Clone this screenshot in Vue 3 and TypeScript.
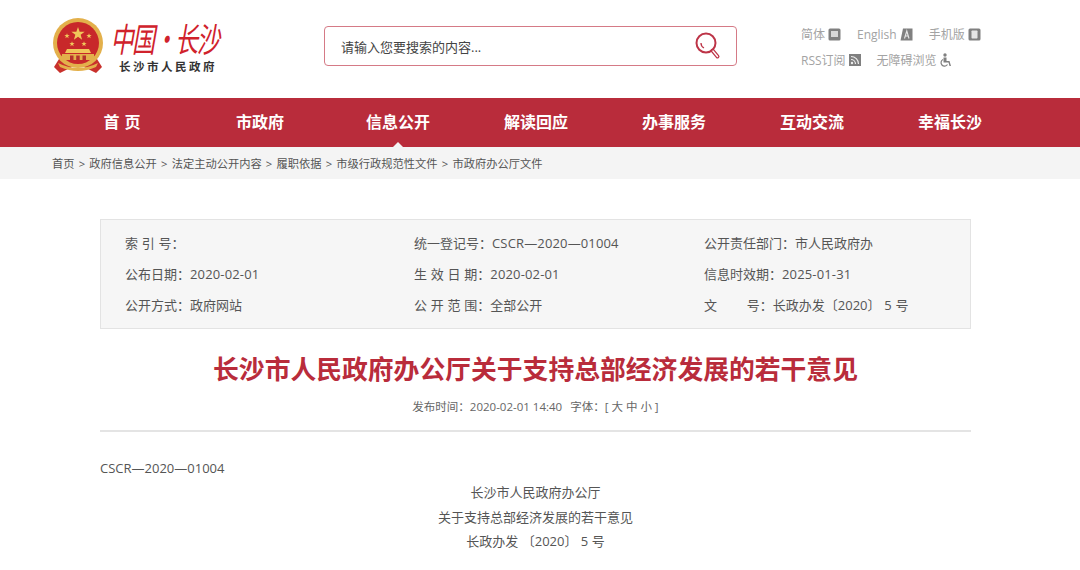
<script setup lang="ts">
const navItems: string[] = ['首 页', '市政府', '信息公开', '解读回应', '办事服务', '互动交流', '幸福长沙']
const crumbs: string[] = ['首页', '政府信息公开', '法定主动公开内容', '履职依据', '市级行政规范性文件', '市政府办公厅文件']
const stars: { x: number; y: number; s: number }[] = [
  { x: 26, y: 17, s: 7 },
  { x: 15, y: 19, s: 2.8 },
  { x: 20, y: 27, s: 2.8 },
  { x: 32, y: 27, s: 2.8 },
  { x: 37, y: 19, s: 2.8 },
]
function starPoints(cx: number, cy: number, r: number): string {
  const pts: string[] = []
  for (let i = 0; i < 10; i++) {
    const rad = i % 2 === 0 ? r : r * 0.4
    const a = (Math.PI / 5) * i - Math.PI / 2
    pts.push(`${(cx + rad * Math.cos(a)).toFixed(2)},${(cy + rad * Math.sin(a)).toFixed(2)}`)
  }
  return pts.join(' ')
}
type Cell = { label: string; value: string; latin?: boolean }
const infoRows: Cell[][] = [
  [
    { label: '索 引 号：', value: '' },
    { label: '统一登记号：', value: 'CSCR—2020—01004', latin: true },
    { label: '公开责任部门：', value: '市人民政府办' },
  ],
  [
    { label: '公布日期：', value: '2020-02-01', latin: true },
    { label: '生 效 日 期：', value: '2020-02-01', latin: true },
    { label: '信息时效期：', value: '2025-01-31', latin: true },
  ],
  [
    { label: '公开方式：', value: '政府网站' },
    { label: '公 开 范 围：', value: '全部公开' },
    { label: '文　　 号：', value: '长政办发〔2020〕 5 号' },
  ],
]
</script>

<template>
  <div class="page">
    <header class="header">
      <div class="logo">
        <svg class="emblem" width="52" height="58" viewBox="0 0 52 58">
          <path d="M7 42 L2 50 L8 56 L20 50 L32 50 L44 56 L50 50 L45 42 Z" fill="#c9312c" />
          <circle cx="26" cy="26" r="25" fill="#e3b04b" />
          <circle cx="26" cy="26" r="21" fill="#c8282a" />
          <polygon v-for="(st, i) in stars" :key="i" :points="starPoints(st.x, st.y, st.s)" fill="#f0c75a" />
          <path d="M15 32 H37 L39 36 H13 Z" fill="#f0c75a" />
          <path d="M10 37 H42 V43 H10 Z" fill="#e3b04b" />
          <path d="M18 38.500 h3.500 v4.500 h-3.500 Z M24.200 38.500 h3.500 v4.500 h-3.500 Z M30.500 38.500 h3.500 v4.500 h-3.500 Z" fill="#b5332c" />
          <path d="M6 46 Q26 56 46 46 L44 50 Q26 58 8 50 Z" fill="#e3b04b" />
        </svg>
        <div class="logo-text">
          <div class="logo-brush">中国·长沙</div>
          <div class="logo-name">长沙市人民政府</div>
        </div>
      </div>

      <div class="search">
        <span class="placeholder">请输入您要搜索的内容...</span>
        <svg width="26" height="28" viewBox="0 0 26 28" fill="none" stroke="#bd3447">
          <circle cx="11" cy="11" r="9.500" stroke-width="2" />
          <path d="M6 11 a5.500 5.500 0 0 0 3 5" stroke-width="1.300" />
          <path d="M17.500 18.500 L22.500 24.500" stroke-width="4" stroke-linecap="round" />
          <path d="M18 19 L22.500 24.500" stroke="#fff" stroke-width="1.400" stroke-linecap="round" />
        </svg>
      </div>

      <div class="tools">
        <div class="tool-row">
          <span class="tool">简体
            <svg width="13" height="13" viewBox="0 0 13 13"><rect x="0.500" y="0.500" width="12" height="12" rx="1.500" fill="#808080" /><rect x="3" y="3" width="7" height="6" fill="#d8d8d8" /></svg>
          </span>
          <span class="tool">English
            <svg width="13" height="13" viewBox="0 0 13 13"><path d="M3 0.500 H12.500 V12.500 H0.500 Z" fill="#808080" /><path d="M4.500 10.500 L6.800 3 L9 10.500 M5.300 8 H8.300" stroke="#e6e6e6" stroke-width="1.100" fill="none" /></svg>
          </span>
          <span class="tool">手机版
            <svg width="13" height="13" viewBox="0 0 13 13"><rect x="0.500" y="0.500" width="12" height="12" rx="1.500" fill="#808080" /><rect x="3.500" y="2.500" width="6" height="8" rx="0.700" fill="#e6e6e6" /></svg>
          </span>
        </div>
        <div class="tool-row">
          <span class="tool">RSS订阅
            <svg width="12" height="12" viewBox="0 0 12 12"><rect width="12" height="12" fill="#808080" /><circle cx="3" cy="9" r="1.200" fill="#eee" /><path d="M2 5.500 A4.500 4.500 0 0 1 6.500 10 M2 2.500 A7.500 7.500 0 0 1 9.500 10" stroke="#eee" stroke-width="1.200" fill="none" /></svg>
          </span>
          <span class="tool">无障碍浏览
            <svg width="12" height="14" viewBox="0 0 12 14"><circle cx="5" cy="2" r="1.700" fill="#808080" /><path d="M3.500 4.500 h3 v3.500 h3 l1.500 5 h-1.500 l-1 -3.500 h-5 Z" fill="#808080" /><path d="M3 6.500 a3.500 3.500 0 1 0 4.500 5" stroke="#808080" stroke-width="1.200" fill="none" /></svg>
          </span>
        </div>
      </div>
    </header>

    <nav class="nav">
      <a v-for="(item, i) in navItems" :key="item" class="nav-item" :class="{ active: i === 2 }">{{ item }}</a>
    </nav>

    <div class="crumbs">
      <template v-for="(c, i) in crumbs" :key="c">
        <span v-if="i > 0" class="sep">&gt;</span>
        <span>{{ c }}</span>
      </template>
    </div>

    <main class="main">
      <section class="info">
        <template v-for="(row, r) in infoRows" :key="r">
          <div v-for="(cell, c) in row" :key="c" class="info-cell">{{ cell.label }}<span :class="{ latin: cell.latin }">{{ cell.value }}</span></div>
        </template>
      </section>

      <h1 class="title">长沙市人民政府办公厅关于支持总部经济发展的若干意见</h1>
      <div class="meta">发布时间：2020-02-01 14:40 <span class="font-switch">字体：[ 大 中 小 ]</span></div>

      <article class="body">
        <p class="doc-no">CSCR—2020—01004</p>
        <p class="center">长沙市人民政府办公厅</p>
        <p class="center">关于支持总部经济发展的若干意见</p>
        <p class="center">长政办发 〔2020〕 5 号</p>
      </article>
    </main>
  </div>
</template>

<style scoped>
.page {
  width: 1080px;
  height: 570px;
  overflow: hidden;
  background: #fff;
  font-family: "Open Sans", "Noto Sans CJK SC", sans-serif;
  color: #555;
}
.header {
  height: 98px;
  display: flex;
  align-items: flex-start;
  box-sizing: border-box;
  padding-left: 52px;
}
.logo {
  width: 272px;
  display: flex;
  padding-top: 17px;
}
.emblem {
  flex: none;
}
.logo-text {
  margin-left: 9px;
}
.logo-brush {
  font-family: "Noto Sans CJK SC", sans-serif;
  font-weight: 400;
  font-size: 30px;
  line-height: 40px;
  letter-spacing: -2px;
  width: 108px;
  white-space: nowrap;
  color: #d0222c;
  transform: skewX(-10deg) scale(0.77, 1.12);
  transform-origin: left center;
}
.logo-name {
  font-family: "Noto Sans CJK SC", sans-serif;
  font-size: 11.500px;
  font-weight: 700;
  letter-spacing: 2.500px;
  line-height: 18px;
  margin: 0 0 0 6px;
  color: #333;
  white-space: nowrap;
}
.search {
  width: 413px;
  height: 40px;
  margin-top: 26px;
  box-sizing: border-box;
  border: 1px solid #d57a86;
  border-radius: 4px;
  display: flex;
  align-items: center;
  justify-content: space-between;
  padding: 0 15px 0 16px;
}
.placeholder {
  font-size: 13px;
  color: #444;
}
.tools {
  margin: 25px 0 0 64px;
  display: flex;
  flex-direction: column;
  gap: 8px;
  font-size: 12px;
  color: #a3a3a3;
}
.tool-row {
  display: flex;
  gap: 16px;
  height: 18px;
  align-items: center;
}
.tool {
  display: inline-flex;
  align-items: center;
  gap: 3px;
  white-space: nowrap;
}
.nav {
  height: 49px;
  background: #b92c3b;
  display: flex;
  padding-left: 53px;
}
.nav-item {
  width: 138px;
  text-align: center;
  line-height: 49px;
  color: #fff;
  font-size: 16px;
  font-weight: 700;
  word-spacing: 1px;
  position: relative;
  white-space: pre;
}
.nav-item.active::after {
  content: "";
  position: absolute;
  left: 50%;
  bottom: 0;
  margin-left: -5px;
  border: 5px solid transparent;
  border-top: 0;
  border-bottom: 5px solid #f4f4f4;
}
.crumbs {
  height: 32px;
  background: #f4f4f4;
  display: flex;
  align-items: center;
  padding-left: 52px;
  font-size: 11.250px;
  color: #555;
  gap: 4.200px;
  white-space: nowrap;
}
.main {
  width: 871px;
  margin-left: 100px;
  padding-top: 40px;
}
.info {
  height: 110px;
  box-sizing: border-box;
  background: #f6f6f6;
  border: 1px solid #e3e3e3;
  display: grid;
  grid-template-columns: 289px 290px 1fr;
  grid-auto-rows: 31px;
  align-content: center;
  padding-left: 24px;
  font-size: 13px;
  word-spacing: 0.400px;
  color: #555;
}
.info-cell {
  line-height: 31px;
  white-space: nowrap;
}
.latin {
  letter-spacing: 0.150px;
}
.title {
  margin: 23px 0 0;
  text-align: center;
  font-size: 25.800px;
  line-height: 32px;
  font-weight: 700;
  color: #b92c3b;
  font-family: "Noto Sans CJK SC", sans-serif;
}
.meta {
  margin-top: 13px;
  text-align: center;
  font-size: 11.500px;
  line-height: 20px;
  color: #666;
  padding-bottom: 13px;
  border-bottom: 2px solid #e4e4e4;
}
.font-switch {
  margin-left: 5px;
}
.body {
  padding-top: 24px;
  font-size: 13px;
  color: #555;
}
.body p {
  margin: 0;
  line-height: 24.300px;
}
.center {
  text-align: center;
}
</style>
